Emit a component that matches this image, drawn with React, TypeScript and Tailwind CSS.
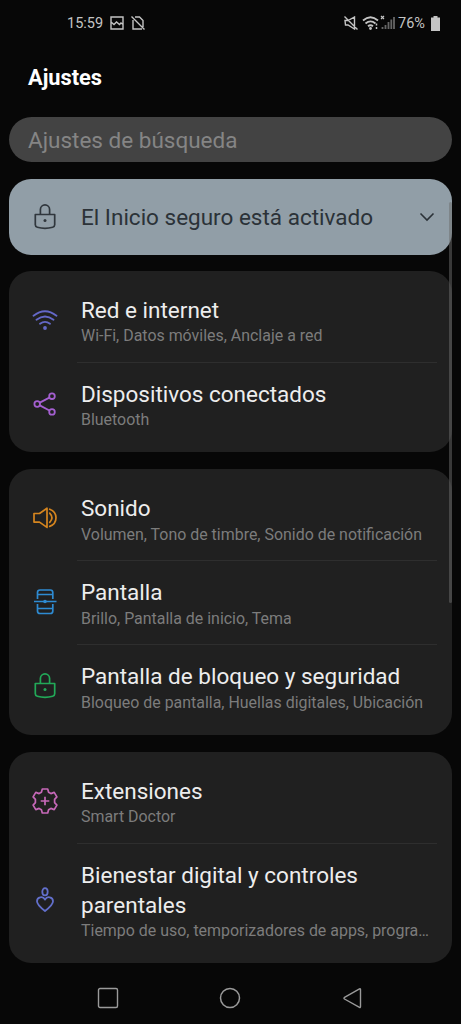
import type { ReactNode } from "react";

type Item = {
  title: string;
  detail: string;
  icon: ReactNode;
};

function LockIcon({ className }: { className: string }) {
  return (
    <svg viewBox="0 0 24 28" className={`w-6 h-7 ${className}`} fill="none" stroke="currentColor" strokeWidth="1.7" strokeLinejoin="round">
      <path d="M7.4 11.5V6.500a4.600 4.600 0 0 1 9.200 0v5" />
      <path d="M2.300 11.500h19.400v10.200q0 1.900-2 2.500-7.700 2.200-15.400 0-2-.6-2-2.500z" />
      <circle cx="12" cy="17.500" r="1.500" fill="currentColor" stroke="none" />
    </svg>
  );
}

function WifiIcon() {
  return (
    <svg viewBox="0 0 28 28" className="w-7 h-7 text-[#6468c8]" fill="none" stroke="currentColor" strokeWidth="1.8" strokeLinecap="round">
      <path d="M2.500 9.800q11.500-9 23 0M5.500 13.800q8.500-6.600 17 0M9 17.800q5-3.700 10 0" />
      <circle cx="14" cy="22" r="1.900" fill="currentColor" stroke="none" />
    </svg>
  );
}

function ShareIcon() {
  return (
    <svg viewBox="0 0 28 28" className="w-7 h-7 text-[#a45fd0]" fill="none" stroke="currentColor" strokeWidth="1.8">
      <circle cx="6.200" cy="14" r="2.800" />
      <circle cx="21" cy="6.200" r="2.800" />
      <circle cx="21" cy="21.900" r="2.800" />
      <path d="M8.800 12.600l9.600-5M8.800 15.400l9.600 5.100" />
    </svg>
  );
}

function SoundIcon() {
  return (
    <svg viewBox="0 0 28 28" className="w-7 h-7 text-[#d5851f]" fill="none" stroke="currentColor" strokeWidth="1.7">
      <path d="M3 9.500h5.500l7.500-5.300v19.200l-7.500-5.300H3z" strokeLinejoin="round" />
      <path d="M18.700 9.200q4.400 4.600 0 9.200" strokeLinecap="round" />
      <path d="M18.700 5.200q6.300 2.300 6.300 8.600t-6.300 8.600" strokeLinecap="round" />
    </svg>
  );
}

function DisplayIcon() {
  return (
    <svg viewBox="0 0 28 28" className="w-7 h-7 text-[#2e8bd2]" fill="none" stroke="currentColor" strokeWidth="1.7">
      <path d="M6.500 11V4.500q0-2.500 2.500-2.500h10.300q2.500 0 2.500 2.500V11M6.500 16v7q0 2.500 2.500 2.500h10.300q2.500 0 2.500-2.500v-7M6.500 6.500h15.300M6.500 20.500h15.300M3 13.500h22.500" />
      <circle cx="14" cy="13.500" r="1.800" fill="currentColor" stroke="none" />
    </svg>
  );
}

function ExtensionsIcon() {
  return (
    <svg viewBox="0 0 28 28" className="w-7 h-7 text-[#c668b8]" fill="none" stroke="currentColor" strokeWidth="1.7" strokeLinejoin="round">
      <path d="M11.300 2h5.400l.9 3.300 2.300 1.300 3.300-1.200 2.700 4.500-2.300 2.500v3.200l2.300 2.500-2.700 4.500-3.300-1.200-2.300 1.300-.9 3.300h-5.400l-.9-3.300-2.300-1.300-3.300 1.200-2.700-4.500 2.300-2.500v-3.200l-2.300-2.500 2.700-4.500 3.300 1.200 2.300-1.300z" />
      <path d="M14 9.700v8.600M9.700 14h8.600" />
    </svg>
  );
}

function WellbeingIcon() {
  return (
    <svg viewBox="0 0 28 28" className="w-7 h-7 text-[#626fcb]" fill="none" stroke="currentColor" strokeWidth="1.8">
      <ellipse cx="14" cy="5.800" rx="2.700" ry="3.600" />
      <path d="M14 25C9.500 21.600 6 18.700 6 15.300c0-4.500 6-5.600 8-1.700 2-3.900 8-2.800 8 1.700 0 3.400-3.500 6.300-8 9.700z" strokeLinejoin="round" />
    </svg>
  );
}

const groups: Item[][] = [
  [
    { title: "Red e internet", detail: "Wi-Fi, Datos móviles, Anclaje a red", icon: <WifiIcon /> },
    { title: "Dispositivos conectados", detail: "Bluetooth", icon: <ShareIcon /> },
  ],
  [
    { title: "Sonido", detail: "Volumen, Tono de timbre, Sonido de notificación", icon: <SoundIcon /> },
    { title: "Pantalla", detail: "Brillo, Pantalla de inicio, Tema", icon: <DisplayIcon /> },
    {
      title: "Pantalla de bloqueo y seguridad",
      detail: "Bloqueo de pantalla, Huellas digitales, Ubicación",
      icon: <LockIcon className="text-[#22a958]" />,
    },
  ],
  [
    { title: "Extensiones", detail: "Smart Doctor", icon: <ExtensionsIcon /> },
    {
      title: "Bienestar digital y controles parentales",
      detail: "Tiempo de uso, temporizadores de apps, progra…",
      icon: <WellbeingIcon />,
    },
  ],
];

function StatusBar() {
  return (
    <header className="flex h-[46px] items-center justify-between pl-[67px] pr-[20px] text-[14.5px] text-[#c4c4c4]">
      <div className="flex items-center">
        <span className="w-[43px] pt-px">15:59</span>
        <svg viewBox="0 0 14 14" className="w-3.5 h-3.5" fill="none" stroke="currentColor" strokeWidth="1.4">
          <path d="M1 1h12v12H1zM1 6l3 2.500 2.500-2.500 3 2.500L11 7l2 1.500" />
        </svg>
        <svg viewBox="0 0 14 14" className="ml-[7px] w-3.5 h-3.5" fill="none" stroke="currentColor" strokeWidth="1.4">
          <path d="M4 1h4.500L12 4.500V11M2 4v9h9M.5.5l13 13" />
        </svg>
      </div>
      <div className="flex items-center">
        <svg viewBox="0 0 14 14" className="mr-px w-3.5 h-3.5" fill="none" stroke="currentColor" strokeWidth="1.4">
          <path d="M1 4.500h3L10.500 1v12L4 9H1.500zM.5.5l13 13" />
        </svg>
        <svg viewBox="0 0 18 16" className="ml-[3px] w-[18px] h-4" fill="none" stroke="currentColor" strokeWidth="1.8">
          <path d="M1 5.500q7.500-6.500 15 0M3.500 8.500q5-4.300 10 0M6 11.300q2.500-2 5 0" />
          <circle cx="8.500" cy="13.500" r="1.400" fill="currentColor" stroke="none" />
          <path d="M14.500 8.500v2M14.500 12v2" strokeWidth="1.500" />
        </svg>
        <svg viewBox="0 0 15 16" className="w-[15px] h-4" fill="none">
          <path d="M1 1l3 3M4 1L1 4" stroke="#c4c4c4" strokeWidth="1.2" />
          <path d="M2.500 12v2M5.500 10v4M8.500 7v7M11.300 4.500V14M14 2v12" stroke="#666" strokeWidth="1.8" />
        </svg>
        <span className="ml-[3px] w-[33px] pt-px">76%</span>
        <svg viewBox="0 0 9 15" className="mr-px w-[9px] h-[15px]" fill="currentColor">
          <path d="M2.500 0h4v1.500H9V15H0V1.500h2.500z" />
        </svg>
      </div>
    </header>
  );
}

function Row({ item, divided }: { item: Item; divided: boolean }) {
  return (
    <div className="flex">
      <div className="flex w-[68px] shrink-0 items-center pl-[22px]">
        <div className="flex w-7 justify-center">{item.icon}</div>
      </div>
      <div className={`mr-[15px] min-w-0 flex-1 border-t pt-[15.7px] pb-[14.5px] pl-1 ${divided ? "border-[#2e2e2e]" : "border-transparent"}`}>
        <h2 className="text-[22.5px] leading-[30px] text-[#ededed]">{item.title}</h2>
        <p className="mt-[0.8px] text-[15.94px] leading-[22px] whitespace-nowrap text-[#7c7c7c]">{item.detail}</p>
      </div>
    </div>
  );
}

export default function App() {
  return (
    <div className="relative flex h-[1024px] w-[461px] flex-col overflow-hidden bg-[#070707] font-['Roboto',sans-serif]">
      <StatusBar />
      <h1 className="pl-7 text-[21.8px] leading-[64px] font-bold text-white">Ajustes</h1>

      <main className="mt-[7px] flex flex-col gap-[17px] px-[9px]">
        <div className="flex h-[45px] items-center rounded-full bg-[#434343] pt-0.5 pl-[19px] text-[22.5px] text-[#858585]">
          Ajustes de búsqueda
        </div>

        <div className="my-[-0.5px] flex h-[76px] items-center rounded-[22px] bg-[#919ea7] pl-6 text-[22.5px] text-[#2b3238]">
          <LockIcon className="text-[#30373d]" />
          <span className="ml-6 flex-1 pt-0.5">El Inicio seguro está activado</span>
          <svg viewBox="0 0 16 10" className="mr-[17px] w-4 h-2.5" fill="none" stroke="currentColor" strokeWidth="1.6">
            <path d="M1.500 1.500L8 8l6.500-6.500" />
          </svg>
        </div>

        {groups.map((group) => (
          <section key={group[0].title} className="rounded-[22px] bg-[#202020] pt-[7px] pb-[6.5px]">
            {group.map((item, i) => (
              <Row key={item.title} item={item} divided={i > 0} />
            ))}
          </section>
        ))}
      </main>

      {/* Scroll indicator */}
      <div className="absolute top-[202px] right-[9px] h-[401px] w-[3px] rounded-full bg-[#6c6c6c]/50" />

      <nav className="mt-auto flex h-[53px] items-center pl-[97px] text-[#9a9a9a]">
        <svg viewBox="0 0 22 22" className="w-[22px] h-[22px]" fill="none" stroke="currentColor" strokeWidth="1.4">
          <rect x="1.500" y="1.500" width="19" height="19" rx="1.500" />
        </svg>
        <svg viewBox="0 0 22 22" className="ml-[100px] w-[22px] h-[22px]" fill="none" stroke="currentColor" strokeWidth="1.5">
          <circle cx="11" cy="11" r="9.500" />
        </svg>
        <svg viewBox="0 0 22 22" className="ml-[101px] w-[22px] h-[22px]" fill="none" stroke="currentColor" strokeWidth="1.4" strokeLinejoin="round">
          <path d="M17.500 1.800q1-.5 1 .8v17q0 1.300-1 .8L2.500 12q-1-.8 0-1.600z" />
        </svg>
      </nav>
    </div>
  );
}
